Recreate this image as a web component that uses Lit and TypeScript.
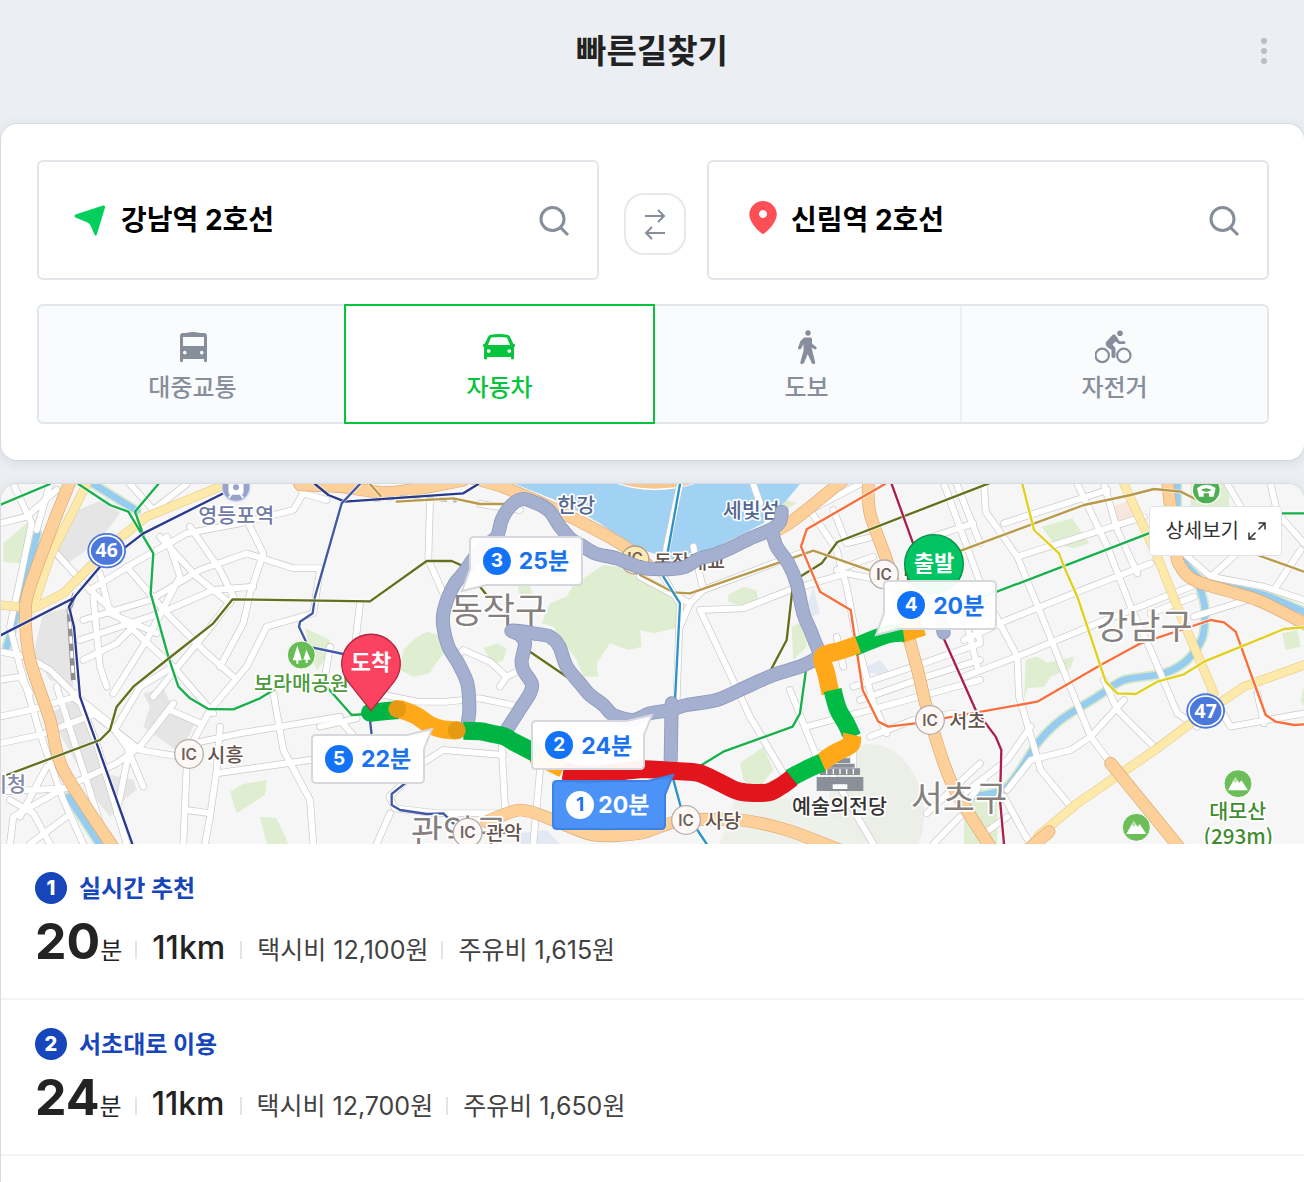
import { LitElement, html, svg, css, nothing } from "lit";
import { customElement, property, state } from "lit/decorators.js";
import { classMap } from "lit/directives/class-map.js";

type Line = [number, string];

/* The map canvas is drawn in four neighbouring sheets; these are their left edges. */
const A = 0;
const B = 960;
const C = 1920;
const D = 2892;

/* Turns each polyline of a path into a softly bending curve through the same points. */
const bend = (path: string) =>
  path
    .split("M")
    .filter(Boolean)
    .map((part) => {
      const p = part.split("L").map((s) => s.trim().split(/\s+/).map(Number));
      let out = `M${p[0][0]} ${p[0][1]}`;
      for (let i = 0; i < p.length - 1; i++) {
        const prev = p[Math.max(i - 1, 0)];
        const a = p[i];
        const b = p[i + 1];
        const next = p[Math.min(i + 2, p.length - 1)];
        const k = 7;
        const c1 = [a[0] + (b[0] - prev[0]) / k, a[1] + (b[1] - prev[1]) / k].map(Math.round);
        const c2 = [b[0] - (next[0] - a[0]) / k, b[1] - (next[1] - a[1]) / k].map(Math.round);
        out += `C${c1[0]} ${c1[1]} ${c2[0]} ${c2[1]} ${b[0]} ${b[1]}`;
      }
      return out;
    })
    .join("");

const bendAll = (lines: Line[]): Line[] => lines.map(([x, d]) => [x, bend(d)]);

const streets: Line[] = [
  [A, "M40 12L95 130L60 300L30 440L60 560L120 760L190 960L250 1092"],
  [A, "M0 130L80 110L170 30M150 12L110 150"],
  [A, "M0 515L80 530L150 570L230 650L330 730L380 800L430 920"],
  [A, "M0 600L60 590L90 640M0 790L120 765L290 700M0 710L90 690L230 650"],
  [A, "M170 620L320 1092M230 640L290 790L380 1092"],
  [A, "M30 1092L40 1010L200 920L350 850L420 800L520 670"],
  [A, "M140 860L60 1010M30 960L100 1000L150 1092M90 1092L200 1010M0 935L200 925"],
  [A, "M230 660L420 810L540 830"],
  [A, "M510 690L600 730M560 820L630 690L740 560L800 440L940 400L960 270"],
  [A, "M820 640L850 810L930 960L940 1092M560 860L550 1092"],
  [A, "M660 740L650 870L630 1010L615 1092M560 990L630 1000"],
  [A, "M580 790L720 760L1020 710M650 880L930 840"],
  [A, "M160 210L260 320L400 450L520 560L640 700"],
  [A, "M270 330L400 250L560 160L720 130L880 90L910 40L980 60M910 40L890 12"],
  [A, "M250 420L450 360L600 270L740 220L880 265L960 265"],
  [A, "M240 480L480 400L640 330L760 320M250 540L350 490L420 420"],
  [A, "M480 170L590 290L690 370M570 140L660 270L700 350"],
  [A, "M740 120L790 220L750 340L730 430L660 560"],
  [A, "M280 350L300 560L320 620M380 260L500 400L620 520L700 590"],
  [A, "M700 350L640 430L460 650M500 170L540 290L440 480L340 640"],
  [A, "M300 280L330 400L470 460M390 12L460 90L560 12"],
  [A, "M350 740L420 620L520 560M390 800L350 1000"],
  [B, "M330 60L325 240L370 340M120 370L100 540L130 620"],
  [B, "M170 640L290 665L380 665L480 655L600 680"],
  [B, "M410 530L430 510L510 545L560 590L600 570M560 590L540 620"],
  [B, "M290 860L370 810L550 825M545 800L555 980M660 870L640 1092"],
  [B, "M210 1000L170 1092M255 905L208 950L225 985L350 1000L540 1000"],
  [B, "M0 740L110 715M60 720L180 860M30 500L10 620M480 72L600 90"],
  [C, "M120 12L80 200L70 290L120 370L110 660"],
  [C, "M180 390L330 710L430 880M180 390L310 385L450 330L620 280L720 300L760 340"],
  [C, "M0 290L150 370L120 440M150 370L190 330L160 200M190 330L480 220"],
  [C, "M510 90L590 210L620 320L650 480L700 670L740 760"],
  [C, "M580 90L620 190L700 170M510 90L660 12M590 270L700 230"],
  [C, "M640 620L850 550L1020 490M660 660L860 590L1020 540M500 740L690 690L1020 600"],
  [C, "M450 630L530 830M690 770L820 720L940 700M590 470L610 560M340 12L360 70"],
  [C, "M950 12L1020 190M960 340L1020 480M540 820L700 1092"],
  [C, "M860 1000L1020 850M880 1092L960 1010M640 760L640 860M850 180L1000 130"],
  [D, "M60 12L65 95L160 230L230 400L310 600L380 770L440 850"],
  [D, "M-60 12L60 340L160 530L165 650L210 800L230 870L320 980"],
  [D, "M340 12L430 200L500 380L560 510L640 700L700 740"],
  [D, "M420 12L460 150L520 280M0 480L130 420L380 320L560 250"],
  [D, "M0 590L160 530L400 430L680 320M690 410L850 360M0 400L40 560"],
  [D, "M0 940L130 840L200 740M0 980L60 900M130 930L200 840L320 810L380 770L480 660"],
  [D, "M420 600L460 690L570 800M120 130L430 30M160 230L540 110M560 400L690 350"],
  [D, "M660 220L740 290L900 320L1020 360M740 290L830 210M930 330L1010 210"],
  [D, "M920 12L940 100L1020 190M790 12L830 80M120 950L180 1060L200 1092M60 1060L130 1010"],
  [D, "M740 640L800 740L1020 700M900 730L880 640"],
];

const avenues: Line[] = [
  [A, "M0 375L100 385L190 340L340 190L440 110L680 12M260 12L150 230L100 380"],
  [D, "M480 12L580 230L660 430L750 640"],
  [D, "M1020 555L840 620L720 700L580 805L340 970L220 1070"],
];

const highways = bendAll([
  [A, "M212 0L160 130L90 320L76 400L90 540L150 720L190 870L345 1110"],
  [B, "M-60 14L60 20L200 38L330 20L430 0M440 -10L560 25L730 100L900 190L990 260"],
  [B, "M500 1025L600 990L700 1020L820 1065L960 1060L1080 1022L1260 1020L1400 1050L1560 1110"],
  [C, "M610 0L500 90L440 135L390 160"],
  [C, "M685 0L690 100L750 270L830 560L870 720L940 920L1070 1130"],
  [D, "M610 0L635 210L650 260L700 305L880 360L1040 440"],
  [D, "M440 850L660 1120M190 1110L255 1055"],
]);

const streams = bendAll([
  [A, "M112 160L60 370L20 500M205 950L310 1110M280 12L410 92"],
  [D, "M640 0L645 210L700 290L740 310L900 345L1030 400"],
  [D, "M700 300L722 380L716 470L670 540L600 580L480 600L400 650L290 720L220 790L130 920L30 950"],
]);

const parks: Line[] = [
  [A, "M10 190L80 130L90 170L60 250L10 245Z"],
  [A, "M690 935L730 912L800 900L795 945L710 1000ZM780 1010L830 1015L865 1092L800 1092Z"],
  [A, "M915 445L990 480L990 520L950 570L925 490Z"],
  [B, "M250 510L285 475L320 455L370 470L375 515L340 560L330 580L280 590L240 570Z"],
  [B, "M690 370L740 350L760 315L850 255L900 260L980 310L1040 320L1088 370L1085 440L1000 460L960 450L965 500L925 510L870 490L830 550L835 590L790 590L770 540L740 500L700 440L665 430Z"],
  [B, "M490 505L530 490L560 505L550 540L520 555ZM590 300L630 320L640 350L600 350Z"],
  [C, "M265 345L310 320L350 330L355 370L300 378L265 365Z"],
  [C, "M300 850L370 800L400 870L350 930L310 900Z"],
  [C, "M455 440L500 420L500 500L460 540ZM160 210L440 60L470 70L260 190Z"],
  [D, "M232 140L325 115L375 190L330 205L270 190Z"],
  [D, "M185 540L220 530L250 548L330 530L320 565L260 590L240 620L190 625L180 660Z"],
  [D, "M680 12L795 12L795 80L680 80ZM955 460L1000 450L1010 500L965 510Z"],
  [D, "M0 960L100 940L100 1092L0 1092ZM1020 620L1010 660L1020 680Z"],
];

const blocks: Line[] = [
  [A, "M210 100L320 55L360 100L300 180L190 260L150 220Z"],
  [A, "M130 400L205 385L220 620L150 600L100 520ZM430 640L490 625L520 690L590 720L540 820L430 740L450 680Z"],
  [A, "M150 700L230 660L310 880L400 900L410 930L370 960L330 1010L290 960L190 780Z"],
];

const rails: [string, number, string][] = [
  ["#18b04c", A, "M0 75L150 12M235 12L330 75L385 95L460 220L452 340L505 530L535 620L570 655L625 687L700 688L780 655L870 600M475 12L405 95L430 165"],
  ["#18b04c", B, "M20 620L95 705L170 700"],
  ["#18b04c", C, "M498 570L480 700L458 740L250 815L180 858"],
  ["#18b04c", D, "M60 350L560 158M950 100L1020 100"],
  ["#283a8c", A, "M0 467L220 355L300 260L430 160L690 30M228 345L207 380L222 440L240 650L290 790L397 1092"],
  ["#283a8c", A, "M945 12L985 45L1035 65L1390 40L1435 12"],
  ["#4259a5", B, "M120 12L65 70L-15 350L-22 400L-60 425L-63 440L-35 500L70 522M150 720L155 765M255 910L215 942L215 975L240 990L320 1002L370 1000L400 1030"],
  ["#64701c", A, "M20 885L300 780L330 750L350 680L400 620L500 540L640 430L698 358L1110 364L1280 243L1355 243L1405 265M1440 320L1460 345M1590 515L1710 597"],
  ["#64701c", C, "M395 565L440 480L457 330L480 290L545 250L592 186L1060 5"],
  ["#b99a4a", B, "M150 12L182 48M230 65L400 55L480 72L560 72"],
  ["#b99a4a", C, "M0 285L100 337L150 340L520 212L700 275M940 220L1332 75L1472 45L1542 27L1622 35L1672 60"],
  ["#b99a4a", D, "M880 225L1020 275"],
  ["#2b93c8", C, "M120 12L70 290L120 370L105 660M95 880L122 980M172 1050L200 1092"],
  ["#fa6e3c", C, "M735 12L500 148L483 200L540 335L632 390L668 630L715 725L745 740L825 730L1192 665L1382 555L1502 490L1712 420L1752 427L1787 455L1877 705L1907 725L1962 735L1992 733"],
  ["#ac1f47", C, "M755 12L830 220M900 450L1007 690L1067 770L1084 810L1080 960L1092 1092"],
  ["#e2d01e", D, "M175 12L210 150L285 220L300 260L340 350L410 560L425 605L460 640L515 642L580 605L660 583L720 545L960 447L1020 442"],
];

const alternates = bendAll([
  [B, "M440 745L448 690L442 610L415 550L385 500L370 440L370 400L385 350L405 310L430 280L480 210L530 170L545 120L570 80L608 57L650 70L690 95L720 140L750 175L790 200L830 222L890 235L960 262L1020 268L1090 262L1140 235L1180 225L1230 205L1290 175L1350 150L1380 125L1385 95"],
  [C, "M395 150L410 200L445 250L470 310L490 400L515 460L535 510M905 430L911 458M95 670L92 840"],
  [B, "M560 750L595 695L630 640L635 610L610 570L605 540L615 490L600 465L575 452L640 460L690 470L718 500L740 560L780 610L810 645L850 675L880 705L940 720L990 700L1050 690L1100 675L1190 660L1270 625L1360 585L1440 560L1490 535"],
]);

const traffic: [string, number, string][] = [
  ["#ffa91a", B, "M640 822L730 866"],
  ["#00b443", B, "M150 698L235 690"],
  ["#00b443", B, "M430 752L480 754L520 762L555 770L585 788L650 822"],
  ["#ffa91a", B, "M234 685L285 705L330 735L370 748L412 752"],
  ["#ffa91a", C, "M780 463L850 440"],
  ["#00bb44", C, "M640 502L740 464L790 458"],
  ["#ffa91a", C, "M572 640L560 585L548 530L600 512L654 494"],
  ["#00bb44", C, "M578 630L595 690L618 730L638 772"],
  ["#ffa91a", C, "M540 850L580 822L632 794L636 764"],
  ["#00bb44", C, "M450 894L500 868L546 848"],
  ["#e2141c", C, "M-230 872L-150 884L0 868L60 870L120 874L180 880L240 908L300 935L380 938L420 920L456 894"],
];

const junctions: [number, number, string, number][] = [
  [A + 567, 822, "시흥", A + 622],
  [B + 443, 1058, "관악", B + 498],
  [C + 138, 1020, "사당", C + 195],
  [C + 732, 283, "반포", C + 790],
  [C + 870, 720, "서초", C + 928],
];

const districts: [number, number, string][] = [
  [B + 392, 428, "동작구"],
  [D + 396, 476, "강남구"],
  [C + 812, 992, "서초구"],
  [B + 272, 1096, "관악구"],
];

const on = (x: number) => `translate(${x} 0)`;

interface Callout {
  n: number;
  minutes: number;
  x: number;
  y: number;
  tail: "sw" | "ne";
  main?: boolean;
}

/* x and y are shares of the map's width and height, in per cent. */
const callouts: Callout[] = [
  { n: 5, minutes: 22, x: 23.8, y: 69.4, tail: "ne" },
  { n: 3, minutes: 25, x: 35.9, y: 14.4, tail: "sw" },
  { n: 4, minutes: 20, x: 67.7, y: 26.7, tail: "sw" },
  { n: 2, minutes: 24, x: 40.7, y: 65.6, tail: "ne" },
  { n: 1, minutes: 20, x: 42.3, y: 82.2, tail: "ne", main: true },
];

@customElement("route-map")
export class RouteMap extends LitElement {
  static styles = css`
    :host {
      display: block;
      position: relative;
      overflow: hidden;
      border-radius: 16px 16px 0 0;
    }
    .canvas {
      display: block;
      width: 100%;
      aspect-ratio: 1303 / 360;
      background: #f6f6f6;
      font-family: Inter, "Noto Sans CJK KR", sans-serif;
    }
    .line {
      fill: none;
      stroke-linejoin: round;
      stroke-linecap: round;
    }
    .flat {
      stroke-linecap: butt;
    }
    .halo {
      paint-order: stroke;
      stroke: #fff;
      stroke-width: 10px;
      stroke-linejoin: round;
    }
    .district {
      font-size: 105px;
      font-weight: 400;
      fill: #85807e;
    }
    .place {
      font-size: 62px;
      font-weight: 500;
    }
    .ic {
      font-size: 46px;
      font-weight: 600;
      fill: #6f625e;
      text-anchor: middle;
    }
    .middle {
      text-anchor: middle;
    }
    .callout {
      position: absolute;
      display: flex;
      align-items: center;
      gap: 8px;
      width: 114px;
      height: 50px;
      padding: 0 0 0 14px;
      border: 0;
      background: none;
      color: #1a73ee;
      font: 700 23px Inter, "Noto Sans CJK KR", sans-serif;
      white-space: nowrap;
      cursor: pointer;
    }
    .callout.main {
      gap: 4px;
      color: #fff;
    }
    .bubble {
      position: absolute;
      inset: 0;
      overflow: visible;
      fill: #fff;
      fill-opacity: 0.95;
      stroke: #d5d8dd;
      stroke-width: 2px;
    }
    .main .bubble {
      fill: #428df8;
      stroke: #3b82e6;
    }
    .num {
      position: relative;
      display: grid;
      place-items: center;
      width: 28px;
      height: 28px;
      border-radius: 50%;
      background: #1272f8;
      color: #fff;
      font-size: 19px;
      line-height: 28px;
    }
    .main .num {
      background: #fff;
      color: #1a73ee;
    }
    .time {
      position: relative;
      padding-bottom: 3px;
    }
    .detail {
      position: absolute;
      top: 22px;
      right: 22px;
      display: flex;
      align-items: center;
      gap: 9px;
      height: 50px;
      padding: 0 15px;
      border: 1px solid #e0e3e6;
      border-radius: 4px;
      background: #fff;
      color: #333;
      font: 400 20px Inter, "Noto Sans CJK KR", sans-serif;
      cursor: pointer;
    }
    .detail span {
      padding-bottom: 3px;
    }
  `;

  private strokes(lines: Line[], colour: string, width: number) {
    return lines.map(
      ([x, d]) => svg`<path class="line" transform=${on(x)} d=${d} stroke=${colour} stroke-width=${width}></path>`,
    );
  }

  private areas(shapes: Line[], colour: string) {
    return shapes.map(([x, d]) => svg`<path transform=${on(x)} d=${d} fill=${colour}></path>`);
  }

  private mountain(x: number, y: number) {
    return svg`<g transform="translate(${x} ${y})">
      <circle r="42" fill="#6cbf58" stroke="#fff" stroke-width="3"></circle>
      <path d="M-30 20L-8 -20L4 -2L10 -10L30 20Z" fill="#fff"></path>
      <path d="M-14 -8L-8 -2L-2 -8L4 0L-8 -20Z" fill="#6cbf58" opacity=".5"></path>
    </g>`;
  }

  private shield(x: number, y: number, label: string) {
    return svg`<g transform="translate(${x} ${y})">
      <ellipse rx="58" ry="53" fill="#4c78dc"></ellipse>
      <ellipse rx="50" ry="45" fill="#4c78dc" stroke="#fff" stroke-width="5"></ellipse>
      <text class="middle" y="20" font-size="58" font-weight="700" fill="#fff" font-family="Noto Sans">${label}</text>
    </g>`;
  }

  private bubble(tail: "sw" | "ne") {
    const d =
      tail === "sw"
        ? "M5 1H109Q113 1 113 5V45Q113 49 109 49H17L-7 55L1 33V5Q1 1 5 1Z"
        : "M5 1H96L121 -5L113 15V45Q113 49 109 49H5Q1 49 1 45V5Q1 1 5 1Z";
    return html`<svg class="bubble" width="114" height="50" viewBox="0 0 114 50" aria-hidden="true">
      <path d=${d}></path>
    </svg>`;
  }

  render() {
    return html`
      <svg class="canvas" viewBox="3 12 3909 1080" preserveAspectRatio="xMidYMid slice" role="img" aria-label="경로 지도">
        ${this.areas(blocks, "#e5e5e6")} ${this.areas(parks, "#dfedd1")}
        <ellipse cx="2630" cy="980" rx="140" ry="190" fill="#ecefe8" transform="rotate(-12 2630 980)"></ellipse>
        <path d="M2160 1092L2210 940L2440 960L2600 1092Z" fill="#eef1ea"></path>
        <path d="M1560 1060L1640 1050L1680 1092H1560ZM2600 560L2640 540L2680 590L2610 580ZM2440 320L2460 400L2410 420Z" fill="#e3e9f2"></path>
        <path d="M3340 80L3390 60L3420 120L3360 135Z" fill="#f6e6dc"></path>
        <path d="M1545 12L1690 70L1800 130L1900 200L2020 240L2110 225L2170 190L2290 130L2360 60L2400 12Z" fill="#a2d2f3"></path>
        <path d="M1820 0Q1960 60 2120 0Z" fill="#fff"></path>
        <path class="line" d="M1860 4Q1960 34 2080 4" stroke="#f8c78d" stroke-width="14"></path>
        <path class="line" d="M2255 0L2280 80" stroke="#fff" stroke-width="18"></path>
        ${this.strokes(streams, "#d7e8c8", 30)} ${this.strokes(streams, "#95ccf0", 20)}
        ${this.strokes(streets, "#cbc8c8", 22)} ${this.strokes(streets, "#ffffff", 18)}
        ${this.strokes(avenues, "#e9cf92", 28)} ${this.strokes(avenues, "#fde9a9", 24)}
        ${this.strokes(highways, "#dfa873", 38)} ${this.strokes(highways, "#fcd098", 34)}
        <path class="line flat" d="M225 340L207 390L220 600" stroke="#8d8d8d" stroke-width="14"></path>
        <path class="line flat" d="M225 340L207 390L220 600" stroke="#fff" stroke-width="9" stroke-dasharray="22 22"></path>
        <path class="line flat" d="M1120 60L1220 50L1370 62" stroke="#b5b5b5" stroke-width="12" stroke-dasharray="22 18"></path>
        ${rails.map(
          ([colour, x, d]) => svg`
            <path class="line" transform=${on(x)} d=${d} stroke="#fff" stroke-width="12" opacity=".6"></path>
            <path class="line" transform=${on(x)} d=${d} stroke=${colour} stroke-width="7"></path>`,
        )}

        <g class="halo district">
          ${districts.map(([x, y, name]) => svg`<text x=${x} y=${y}>${name}</text>`)}
        </g>
        <g class="halo place">
          <text x="595" y="130" fill="#6f7ba4">영등포역</text>
          <text x="-36" y="936" fill="#8288a5">시청</text>
          <text x="762" y="632" fill="#4c9a3b">보라매공원</text>
          <text x="1672" y="98" fill="#54688f">한강</text>
          <text x="2168" y="114" fill="#54688f">세빛섬</text>
          <text x="1962" y="266" font-size="58" fill="#64534c">동작대교</text>
          <text x="2376" y="1002" fill="#333">예술의전당</text>
          <text class="middle" x="3713" y="1018" fill="#3f8c30">대모산</text>
          <text class="middle" x="3715" y="1092" fill="#3f8c30" font-family="Noto Sans CJK KR">(293m)</text>
        </g>
        <circle cx="1905" cy="240" r="42" fill="#fde9b4" stroke="#b59a8c" stroke-width="4"></circle>
        <text class="ic" x="1905" y="252">IC</text>
        ${junctions.map(
          ([x, y, name, labelX]) => svg`
            <circle cx=${x} cy=${y} r="43" fill="#fdf8f6" stroke="#b8aeaa" stroke-width="4"></circle>
            <text class="ic" x=${x} y=${y + 17}>IC</text>
            <text class="halo" x=${labelX} y=${y + 23} font-size="59" font-weight="500" fill="#64534c">${name}</text>`,
        )}
        ${this.shield(320, 212, "46")} ${this.shield(D + 725, 693, "47")}
        <g transform="translate(708 22)">
          <circle r="42" fill="#98a3cd" stroke="#d5daec" stroke-width="4"></circle>
          <path d="M-20 -24H20V14Q20 20 14 20H-14Q-20 20 -20 14ZM-14 22L-22 32M14 22L22 32" fill="#fff" stroke="#fff" stroke-width="5"></path>
          <circle r="9" cy="0" fill="#98a3cd"></circle>
        </g>
        <g transform="translate(904 525)">
          <circle r="42" fill="#66bd55" stroke="#fff" stroke-width="3"></circle>
          <path d="M-12 -28L-26 16H-15V26H-9V16H2ZM15 -16L6 14H13V24H19V14H28Z" fill="#fff"></path>
        </g>
        <g transform="translate(3619 30)">
          <circle r="42" fill="#4eae53" stroke="#fff" stroke-width="4"></circle>
          <path d="M-28 -6Q0 -26 28 -6L22 20H8V10H-8V20H-22ZM-16 0Q0 10 16 0Q0 -10 -16 0Z" fill="#fff" fill-rule="evenodd"></path>
        </g>
        ${this.mountain(D + 822, 911)} ${this.mountain(D + 517, 1042)}
        <g transform="translate(2520 835)" fill="#8b8f98">
          <path d="M-60 30H60V50H-60ZM-70 56H70V98H-70ZM-30 0H30V14H-30ZM-44 16H44V28H-44Z"></path>
          <path d="M-22 78H22V92H-22Z" fill="#fff"></path>
          <path d="M-40 32V48M-20 32V48M0 32V48M20 32V48M40 32V48M-11 78V92M0 78V92M11 78V92" stroke="#fff" stroke-width="4"></path>
        </g>

        ${this.strokes(alternates, "#8d99bd", 42)} ${this.strokes(alternates, "#a5b0d0", 37)}
        ${traffic.map(
          ([colour, x, d]) =>
            svg`<path class="line flat" transform=${on(x)} d=${bend(d)} stroke=${colour} stroke-width="54"></path>`,
        )}
        <circle cx="1110" cy="698" r="27" fill="#00b443"></circle>
        <circle cx="1192" cy="687" r="27" fill="#e69a12"></circle>
        <circle cx="1370" cy="751" r="27" fill="#e69a12"></circle>

        <g stroke-width="4">
          <path d="M1113 692L1043 604A88 88 0 1 1 1183 604Z" fill="#fb4260" stroke="#b02742"></path>
          <circle cx="2802" cy="252" r="88" fill="#00c462" stroke="#008f45"></circle>
        </g>
        <g class="middle" font-size="66" font-weight="600" fill="#fff">
          <text x="1113" y="571">도착</text>
          <text x="2802" y="272">출발</text>
        </g>
      </svg>
      ${callouts.map(
        (c) => html`<button
          class=${classMap({ callout: true, main: !!c.main })}
          style="left:${c.x}%;top:${c.y}%"
        >
          ${this.bubble(c.tail)}<span class="num">${c.n}</span><span class="time">${c.minutes}분</span>
        </button>`,
      )}
      <button class="detail">
        <span>상세보기</span>
        <svg width="18" height="18" viewBox="0 0 18 18" fill="none" stroke="#333" stroke-width="1.5" aria-hidden="true">
          <path d="M10.500 1H17V7.500M17 1L10.500 7.500M1 10.500V17H7.500M1 17L7.500 10.500"></path>
        </svg>
      </button>
    `;
  }
}

interface Route {
  name: string;
  minutes: number;
  distance: string;
  taxi: string;
  fuel: string;
}

@customElement("route-item")
export class RouteItem extends LitElement {
  static styles = css`
    :host {
      display: block;
      height: 156px;
      box-sizing: border-box;
      padding: 28px 34px 0;
      border-bottom: 2px solid #f1f3f5;
    }
    .head {
      display: flex;
      align-items: center;
      gap: 12px;
      height: 32px;
      color: #1746bb;
    }
    .rank {
      display: grid;
      place-items: center;
      width: 32px;
      height: 32px;
      border-radius: 50%;
      background: #1746bb;
      color: #fff;
      font-size: 20px;
      font-weight: 800;
    }
    .name {
      margin: 2px 0 0;
      font-size: 24px;
      line-height: 32px;
      font-weight: 700;
    }
    .facts {
      display: flex;
      align-items: baseline;
      margin: 5px 0 0;
      height: 64px;
      line-height: 64px;
      color: #424242;
      font-size: 25px;
      white-space: nowrap;
    }
    .minutes {
      color: #232323;
      font-size: 50px;
      font-weight: 700;
    }
    .unit {
      color: #232323;
      font-size: 24px;
    }
    .distance {
      color: #232323;
      font-size: 32px;
      font-weight: 500;
    }
    .bar {
      width: 2px;
      height: 18px;
      margin: 0 15px 0 13px;
      background: #e1e4e8;
    }
    .distance + .bar {
      margin-left: 15px;
    }
  `;

  @property({ type: Number }) rank = 1;
  @property({ attribute: false }) route!: Route;

  render() {
    const r = this.route;
    return html`
      <div class="head">
        <span class="rank">${this.rank}</span>
        <h2 class="name">${r.name}</h2>
      </div>
      <p class="facts">
        <strong class="minutes">${r.minutes}</strong><span class="unit">분</span>
        <span class="bar"></span>
        <span class="distance">${r.distance}</span>
        <span class="bar"></span>
        <span>택시비 ${r.taxi}원</span>
        <span class="bar"></span>
        <span>주유비 ${r.fuel}원</span>
      </p>
    `;
  }
}

const busIcon = svg`
  <path fill-rule="evenodd" d="M13 6Q20 4 27 6H31Q34 6 34 9V34Q34 35 33 35H32Q31 35 31 34V32H10V34Q10 35 9 35H8Q7 35 7 34V9Q7 6 10 6ZM10 10V19H31V10ZM11.800 23.800A1.800 1.800 0 1 0 11.810 23.800ZM28.700 23.800A1.800 1.800 0 1 0 28.710 23.800Z"></path>`;
const carIcon = svg`
  <path transform="translate(-1 0)" fill-rule="evenodd" d="M11 8Q20 6 29 8Q30 8 31 10L34.500 17H35Q36 17 36 18V19Q36 20 35 20V31Q35 32.500 33 32.500Q32 32.500 32 31V30H8V31Q8 32.500 6.500 32.500Q5 32.500 5 31V20Q4 20 4 19V18Q4 17 5.500 17L9 10Q10 8 11 8ZM12 10.500L9 18H31L28 10.500Q20 9.500 12 10.500ZM9.700 22.200A1.800 1.800 0 1 0 9.710 22.200ZM30.300 22.200A1.800 1.800 0 1 0 30.310 22.200Z"></path>`;
const walkIcon = svg`
  <circle cx="21" cy="6" r="2.700"></circle>
  <path d="M17 10.500H23.500Q25 10.500 25 12V16.500L29.500 20.200Q30 21.500 29 22.300Q28 22.800 27 22L24.500 20.500L28.200 35.500Q28.300 37 26.500 37Q25 37 24.700 36L20.700 27L17 36Q16.500 37 15 37Q13 37 13.300 35.500L16.500 24V17L14.200 21.500Q13 23 11.500 22Q10.800 21.500 11 20.500L13.500 14Z"></path>`;
const bikeIcon = svg`<g transform="translate(-2 0)">
  <circle cx="27" cy="6.200" r="2.800"></circle>
  <circle cx="9.200" cy="28.400" r="6.700" fill="none" stroke="currentColor" stroke-width="2.200"></circle>
  <circle cx="30.800" cy="28.400" r="6.700" fill="none" stroke="currentColor" stroke-width="2.200"></circle>
  <path d="M20 7.600Q21.500 7 22.500 8L26.500 14.200H31.500Q32.700 14.500 32.500 15.700Q32.300 17 31 17H26L22.500 14.500L19.500 17.500L22 20.500Q22.500 21 22.500 22V29.500Q22.300 31 20.500 31Q18.500 31 18.500 29.500V23L13.500 19.500Q11.800 17.500 13 15Z"></path>
</g>`;

const modes = [
  { id: "transit", label: "대중교통", icon: busIcon },
  { id: "car", label: "자동차", icon: carIcon },
  { id: "walk", label: "도보", icon: walkIcon },
  { id: "bike", label: "자전거", icon: bikeIcon },
];

const routes: Route[] = [
  { name: "실시간 추천", minutes: 20, distance: "11km", taxi: "12,100", fuel: "1,615" },
  { name: "서초대로 이용", minutes: 24, distance: "11km", taxi: "12,700", fuel: "1,650" },
];

@customElement("app-root")
export class AppRoot extends LitElement {
  static styles = css`
    :host {
      display: flex;
      flex-direction: column;
      box-sizing: border-box;
      min-height: 100vh;
      padding-left: 1px;
      background: #ebeff3;
      font-family: Inter, "Noto Sans CJK KR", sans-serif;
    }
    .top {
      display: grid;
      grid-template-columns: 48px 1fr 48px;
      align-items: center;
      height: 102px;
      padding: 0 16px 0 15px;
      margin-bottom: 22px;
    }
    .title {
      grid-column: 2;
      margin: 0;
      text-align: center;
      color: #222;
      font-size: 33px;
      line-height: 40px;
      font-weight: 700;
    }
    .plain {
      display: grid;
      place-items: center;
      padding: 0;
      border: 0;
      background: none;
      cursor: pointer;
    }
    .card {
      border-radius: 16px;
      background: #fff;
      box-shadow:
        0 0 0 1px rgba(0, 0, 0, 0.04),
        0 2px 12px rgba(40, 60, 80, 0.12);
    }
    .search {
      display: grid;
      gap: 24px;
      margin-bottom: 24px;
      padding: 36px;
      padding-right: 35px;
    }
    .ends {
      display: grid;
      grid-template-columns: 1fr auto 1fr;
      align-items: center;
    }
    .field {
      display: flex;
      align-items: center;
      box-sizing: border-box;
      height: 120px;
      min-width: 0;
      padding: 0 25px 0 32px;
      border: 2px solid #e2e6ea;
      border-radius: 6px;
    }
    .field input {
      flex: 1;
      min-width: 0;
      padding: 0 0 5px 10px;
      border: 0;
      outline: 0;
      background: none;
      color: #000;
      font: 700 28px Inter, "Noto Sans CJK KR", sans-serif;
    }
    .swap {
      box-sizing: border-box;
      width: 62px;
      height: 62px;
      margin: 8px 21px 0 25px;
      border: 2px solid #e5e8ec;
      border-radius: 20px;
    }
    .modes {
      display: grid;
      grid-template-columns: repeat(4, 1fr);
      border: 2px solid #e2e6ea;
      border-radius: 6px;
      background: #fafbfd;
    }
    .mode {
      display: flex;
      flex-direction: column;
      align-items: center;
      height: 116px;
      padding: 21px 0 0;
      border: 0;
      background: none;
      color: #868e9b;
      font: 500 24px/42px Inter, "Noto Sans CJK KR", sans-serif;
      cursor: pointer;
    }
    .mode:last-child {
      border-left: 2px solid #edf0f3;
    }
    .mode.active {
      height: 120px;
      margin: -2px;
      border: 2px solid #06c43b;
      background: #fff;
      color: #06c43b;
    }
    .result {
      flex: 1;
      border-radius: 16px 16px 0 0;
    }
  `;

  @state() private mode = "car";

  private field(id: string, label: string, value: string, pin: unknown) {
    return html`<div class="field">
      <svg width="40" height="40" viewBox="0 0 40 40" aria-hidden="true">${pin}</svg>
      <input id=${id} type="text" aria-label=${label} .value=${value} />
      <button class="plain" aria-label="${label} 검색">
        <svg width="36" height="36" viewBox="0 0 36 36" fill="none" stroke="#868e9b" stroke-width="3">
          <circle cx="16.500" cy="17" r="11.500"></circle>
          <path d="M24.500 25.500L32 33"></path>
        </svg>
      </button>
    </div>`;
  }

  render() {
    return html`
      <header class="top">
        <h1 class="title">빠른길찾기</h1>
        <button class="plain" aria-label="더보기">
          <svg width="8" height="28" viewBox="0 0 8 28" fill="#b8bec8">
            <circle cx="4" cy="4" r="3"></circle>
            <circle cx="4" cy="14" r="3"></circle>
            <circle cx="4" cy="24" r="3"></circle>
          </svg>
        </button>
      </header>

      <section class="card search">
        <div class="ends">
          ${this.field(
            "from",
            "출발지",
            "강남역 2호선",
            svg`<path d="M4.500 14.500L32 5.500Q34.500 5 34 7.500L26 34Q25 37 23.500 34.500L19.500 25.500Q18.500 23.500 16.500 22.500L4.500 17.500Q2.500 16 4.500 14.500Z" fill="#03cf5d"></path>`,
          )}
          <button class="plain swap" aria-label="출발지와 도착지 바꾸기">
            <svg width="24" height="32" viewBox="0 0 24 32" fill="none" stroke="#868e9b" stroke-width="2">
              <path d="M2 8H21M15 2L21 8L15 14M22 25H3M9 19L3 25L9 31"></path>
            </svg>
          </button>
          ${this.field(
            "to",
            "도착지",
            "신림역 2호선",
            svg`<path fill-rule="evenodd" d="M22 1A13.700 13.700 0 0 1 35.800 14.500C35.800 21 29 29 23.500 33.300Q22 34.500 20.500 33.300C15 29 8.300 21 8.300 14.500A13.700 13.700 0 0 1 22 1ZM22 10A4 4 0 1 0 22.010 10Z" fill="#ff4f56"></path>`,
          )}
        </div>
        <nav class="modes" aria-label="이동 수단">
          ${modes.map(
            (m) => html`<button
              class=${classMap({ mode: true, active: m.id === this.mode })}
              aria-current=${m.id === this.mode ? "true" : nothing}
              @click=${() => (this.mode = m.id)}
            >
              <svg width="40" height="40" viewBox="0 0 40 40" fill="currentColor" aria-hidden="true">${m.icon}</svg>
              ${m.label}
            </button>`,
          )}
        </nav>
      </section>

      <main class="card result">
        <route-map></route-map>
        ${routes.map((r, i) => html`<route-item .rank=${i + 1} .route=${r}></route-item>`)}
      </main>
    `;
  }
}
